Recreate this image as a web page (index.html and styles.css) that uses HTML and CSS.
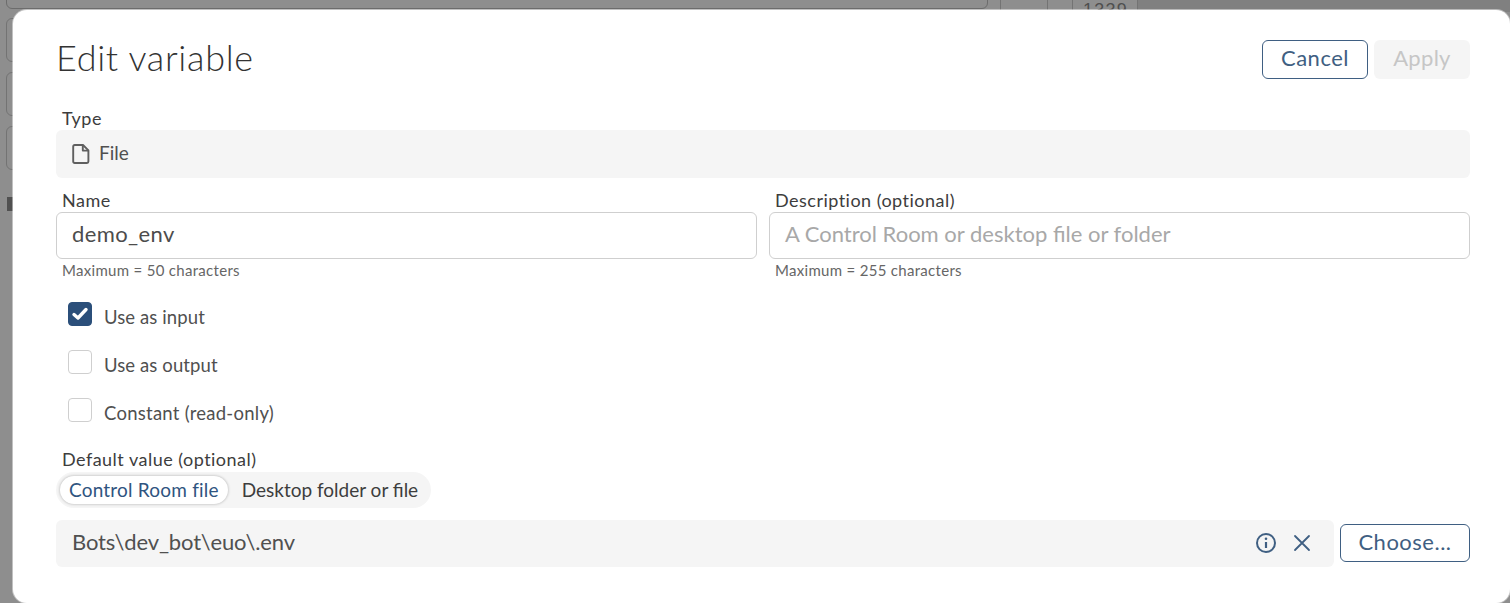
FILE: index.html
```html
<!DOCTYPE html>
<html lang="en">
<head>
<meta charset="utf-8">
<title>Edit variable</title>
<link rel="stylesheet" href="styles.css">
</head>
<body>
<div class="backdrop">
  <div class="bg-bar"></div>
  <div class="bg-cell bg-cell-a"></div>
  <div class="bg-cell bg-cell-b"></div>
  <div class="bg-num">1339</div>
  <div class="bg-panel"></div>
  <div class="bg-side s1"></div>
  <div class="bg-side s2"></div>
  <div class="bg-side s3"></div>
  <div class="bg-mark"></div>
</div>
<main class="modal">
  <header class="head">
    <h1 class="title">Edit variable</h1>
    <div class="actions">
      <button class="btn btn-outline btn-cancel">Cancel</button>
      <button class="btn btn-disabled">Apply</button>
    </div>
  </header>
  <div class="field type-field">
    <div class="label">Type</div>
    <div class="readonly">
      <svg class="file-icon" width="18" height="20" viewBox="0 0 18 20" fill="none" stroke="#5f5f5f" stroke-width="1.9" stroke-linejoin="round"><path d="M2.6 1H11L16.4 6.4V17.6a1.4 1.4 0 0 1-1.4 1.4H2.6a1.4 1.4 0 0 1-1.4-1.4V2.4A1.4 1.4 0 0 1 2.6 1Z"/><path d="M10.8 1V6.6H16.4"/></svg>
      <span>File</span>
    </div>
  </div>
  <div class="two-col">
    <div class="field">
      <div class="label">Name</div>
      <div class="input input-value">demo_env</div>
      <div class="hint">Maximum = 50 characters</div>
    </div>
    <div class="field">
      <div class="label">Description (optional)</div>
      <div class="input placeholder">A Control Room or desktop file or folder</div>
      <div class="hint">Maximum = 255 characters</div>
    </div>
  </div>
  <div class="checks">
    <div class="check-row">
      <span class="box box-on"><svg width="18" height="16" viewBox="0 0 18 16" fill="none" stroke="#fff" stroke-width="3.4" stroke-linecap="round" stroke-linejoin="round"><path d="M3 8.5 7 12 15 3.5"/></svg></span>
      <span class="check-text">Use as input</span>
    </div>
    <div class="check-row"><span class="box"></span><span class="check-text">Use as output</span></div>
    <div class="check-row"><span class="box"></span><span class="check-text check-text-wide">Constant (read-only)</span></div>
  </div>
  <div class="label default-label">Default value (optional)</div>
  <div class="segmented">
    <span class="seg seg-on">Control Room file</span>
    <span class="seg">Desktop folder or file</span>
  </div>
  <div class="file-row">
    <div class="file-value">
      <span class="path">Bots\dev_bot\euo\.env</span>
      <svg class="ic-info" width="22" height="22" viewBox="0 0 22 22" fill="none" stroke="#3f5f82" stroke-width="2"><circle cx="11" cy="11" r="9"/><path d="M11 10v6" stroke-width="2.2"/><circle cx="11" cy="6.8" r="1.3" fill="#3f5f82" stroke="none"/></svg>
      <svg class="ic-close" width="18" height="18" viewBox="0 0 18 18" fill="none" stroke="#3f5f82" stroke-width="1.8" stroke-linecap="round"><path d="M2 2 16 16M16 2 2 16"/></svg>
    </div>
    <button class="btn btn-outline btn-choose">Choose...</button>
  </div>
</main>
</body>
</html>
```
FILE: styles.css
```css
* { box-sizing: border-box; }
html, body { margin: 0; height: 100%; }
body {
  width: 1510px;
  height: 603px;
  overflow: hidden;
  position: relative;
  background: #8e8e8e;
  font-family: Lato, "Open Sans", sans-serif;
  color: #3d3d3d;
}
.backdrop { position: absolute; inset: 0; }
.bg-bar { position: absolute; left: 6px; top: -10px; width: 982px; height: 19px; border: 1px solid #6c6c6c; border-radius: 6px; background: #8e8e8e; }
.bg-cell { position: absolute; top: 0; height: 12px; background: #8e8e8e; border-right: 1px solid #737373; }
.bg-cell-a { left: 1000px; width: 48px; border-left: 1px solid #737373; }
.bg-cell-b { left: 1048px; width: 25px; }
.bg-num { position: absolute; left: 1072px; top: 0; width: 66px; height: 12px; overflow: hidden; background: #8e8e8e; border-right: 1px solid #737373; border-left: 1px solid #737373; padding-left: 10px; font: 18px/20px "Liberation Sans", sans-serif; letter-spacing: 1.2px; color: #4f4f4f; }
.bg-panel { position: absolute; left: 1138px; top: 0; right: 0; height: 12px; background: #808080; }
.bg-side { position: absolute; left: 6px; width: 20px; height: 44px; border: 1px solid #737373; border-radius: 6px; background: #8e8e8e; }
.s1 { top: 18px; } .s2 { top: 72px; } .s3 { top: 126px; }
.bg-mark { position: absolute; left: 7px; top: 197px; width: 6px; height: 14px; background: #505050; }

.modal {
  position: absolute;
  left: 13px; top: 10px;
  width: 1497px; height: 593px;
  background: #fff;
  border-radius: 14px;
  box-shadow: 0 0 0 1px rgba(255,255,255,.45);
  padding: 0 40px 0 43px;
  display: flex;
  flex-direction: column;
}
.head { display: flex; align-items: center; justify-content: space-between; height: 98px; }
.title { margin: -4px 0 0; font-weight: 300; font-size: 36px; line-height: 44px; letter-spacing: .68px; color: #333; }
.actions { display: flex; gap: 6px; }
.btn { font-family: inherit; font-size: 22px; line-height: 34px; height: 39px; border-radius: 6px; padding: 0 0 3px; cursor: pointer; letter-spacing: .5px; }
.btn-outline { background: #fff; border: 1px solid #3f5f82; color: #3f5f82; }
.btn-cancel { width: 106px; }
.btn-disabled { width: 96px; background: #f5f5f5; border: 0; color: #c6c6c6; letter-spacing: .3px; }
.label { font-size: 18px; line-height: 20px; padding-bottom: 2px; letter-spacing: .48px; color: #3d3d3d; padding-left: 6px; }
.readonly { display: flex; align-items: center; gap: 9px; height: 48px; padding-left: 16px; border-radius: 6px; background: #f5f5f5; font-size: 19px; color: #505050; }
.readonly span { margin-top: -4px; }
.two-col { display: grid; grid-template-columns: 701px 701px; gap: 12px; margin-top: 12px; }
.input { height: 47px; border: 1px solid #cfcfcf; border-radius: 6px; padding-left: 15px; line-height: 41px; font-size: 22px; color: #4c4c4c; }
.input-value { letter-spacing: .4px; }
.placeholder { color: #a8a8a8; }
.hint { font-size: 15px; line-height: 18px; letter-spacing: .3px; color: #666; padding: 2px 0 1px 6px; }
.checks { margin-top: 10px; padding-left: 12px; display: flex; flex-direction: column; }
.check-row { display: flex; align-items: center; gap: 12px; height: 48px; font-size: 18.5px; color: #505050; }
.check-text { margin-top: 5px; letter-spacing: .1px; }
.check-text-wide { letter-spacing: .25px; }
.box { width: 24px; height: 24px; border: 1px solid #cfcfcf; border-radius: 4px; display: flex; align-items: center; justify-content: center; }
.box-on { background: #2b4f7a; border-color: #2b4f7a; }
.default-label { margin-top: 15px; }
.segmented { display: inline-flex; align-self: flex-start; align-items: center; height: 36px; padding: 0 4px; border-radius: 18px; background: #f5f5f5; font-size: 19px; margin-top: 1px; }
.seg { padding: 0 9px; height: 28px; line-height: 28px; border-radius: 14px; color: #3d3d3d; }
.seg-on { background: #fff; color: #2f5480; box-shadow: 0 0 3px rgba(0,0,0,.3); letter-spacing: .2px; margin-right: 5px; }
.file-row { display: flex; align-items: center; gap: 6px; margin-top: 12px; }
.file-value { flex: 1; height: 47px; background: #f5f5f5; border-radius: 6px; display: flex; align-items: center; padding: 0 23px 2px 16px; font-size: 22px; color: #505050; }
.path { flex: 1; margin-top: -2px; letter-spacing: -.14px; }
.ic-close { margin-left: 16px; }
.btn-choose { width: 130px; height: 38px; line-height: 33px; margin-top: -2px; }
```
